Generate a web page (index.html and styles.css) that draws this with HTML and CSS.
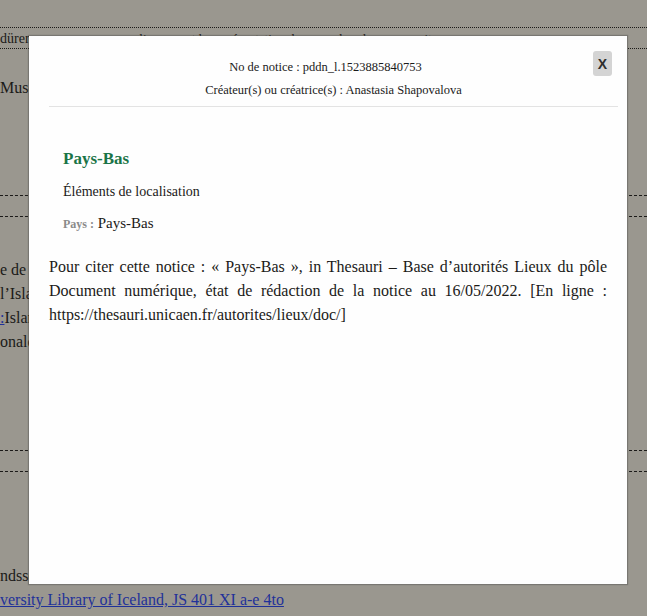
FILE: index.html
```html
<!DOCTYPE html>
<html lang="fr">
<head>
<meta charset="utf-8">
<title>Notice</title>
<link rel="stylesheet" href="styles.css">
</head>
<body>
<div class="page">
  <div class="row-dotted">dürer <span class="hidden-row">— linnaeus et la représentation des pays dans les manuscrits</span></div>
  <div class="line-muse clip">Museum of the North</div>
  <div class="dashed first"></div>
  <div class="dashed"></div>
  <div class="para clip">
    <p>e de l’atlas</p>
    <p>l’Islande</p>
    <p><a href="#">:</a>Islande</p>
    <p>onale</p>
  </div>
  <div class="dashed second"></div>
  <div class="dashed"></div>
  <div class="foot">
    <p class="clip">ndsson</p>
    <p><a href="#">versity Library of Iceland, JS 401 XI a-e 4to</a></p>
  </div>
</div>

<div class="modal">
  <div class="modal-header">
    <p class="notice-no">No de notice : pddn_l.1523885840753</p>
    <p>Créateur(s) ou créatrice(s) : Anastasia Shapovalova</p>
    <button class="close">X</button>
  </div>
  <div class="modal-body">
    <div class="entry">
      <h2 class="title">Pays-Bas</h2>
      <p class="section">Éléments de localisation</p>
      <p class="field"><span class="label">Pays :</span> Pays-Bas</p>
    </div>
    <p class="cite">Pour citer cette notice : « Pays-Bas », in Thesauri – Base d’autorités Lieux du pôle Document numérique, état de rédaction de la notice au 16/05/2022. [En ligne : https://thesauri.unicaen.fr/autorites/lieux/doc/]</p>
  </div>
</div>
</body>
</html>
```

FILE: styles.css
```css
html, body {
  margin: 0;
  padding: 0;
}

body {
  background: #9a978f;
  font-family: "Liberation Serif", "Times New Roman", serif;
  color: #1b1a18;
  width: 647px;
  height: 616px;
  overflow: hidden;
  position: relative;
}

.page {
  padding-top: 27px;
}

.row-dotted {
  border-top: 1px dotted #1b1a18;
  border-bottom: 1px dotted #1b1a18;
  height: 20px;
  line-height: 22px;
  font-size: 14px;
  white-space: nowrap;
  overflow: hidden;
}

.hidden-row {
  padding-left: 90px;
  font-size: 13px;
}

.clip {
  width: 29px;
  overflow: hidden;
}

.line-muse {
  font-size: 16px;
  margin-top: 28px;
  line-height: 22px;
  white-space: nowrap;
}

.dashed {
  border-top: 1px dashed #1b1a18;
  height: 0;
  margin-top: 20px;
}

.dashed.first {
  margin-top: 96px;
}

.para {
  margin-top: 41px;
  font-size: 16px;
  line-height: 24px;
}

.para p,
.foot p {
  margin: 0;
  white-space: nowrap;
}

.dashed.second {
  margin-top: 96px;
}

.foot {
  margin-top: 92px;
  font-size: 16px;
  line-height: 24px;
}

a {
  color: #1f3199;
}

.modal {
  position: absolute;
  left: 29px;
  top: 36px;
  width: 598px;
  height: 548px;
  background: #fefefe;
  box-shadow: 0 0 1px 1px rgba(60, 60, 60, 0.35);
}

.modal-header {
  margin: 0 9px 0 20px;
  padding: 20px 0 4px;
  border-bottom: 1px solid #e3e3e3;
  text-align: center;
  font-size: 12.5px;
  line-height: 23px;
  color: #1a1a1a;
}

.modal-header p {
  margin: 0;
}

.notice-no {
  padding-right: 16px;
}

.close {
  position: absolute;
  top: 15px;
  right: 15px;
  width: 19px;
  height: 25px;
  padding: 0;
  border: none;
  border-radius: 3px;
  background: #d4d4d4;
  font-family: "Liberation Sans", Arial, sans-serif;
  font-weight: bold;
  font-size: 14px;
  color: #2e2e2e;
}

.modal-body {
  padding: 40px 20px 20px;
}

.entry {
  padding-left: 14px;
}

.title {
  margin: 0;
  font-size: 17px;
  line-height: 24px;
  color: #1a7447;
  font-weight: bold;
}

.section {
  margin: 9px 0 0;
  font-size: 14px;
  line-height: 24px;
}

.field {
  margin: 7px 0 0;
  font-size: 15px;
  line-height: 24px;
}

.label {
  font-size: 12px;
  font-weight: bold;
  color: #8a8a8a;
}

.cite {
  margin: 19px 0 0;
  font-size: 16px;
  line-height: 24px;
  text-align: justify;
}
```
